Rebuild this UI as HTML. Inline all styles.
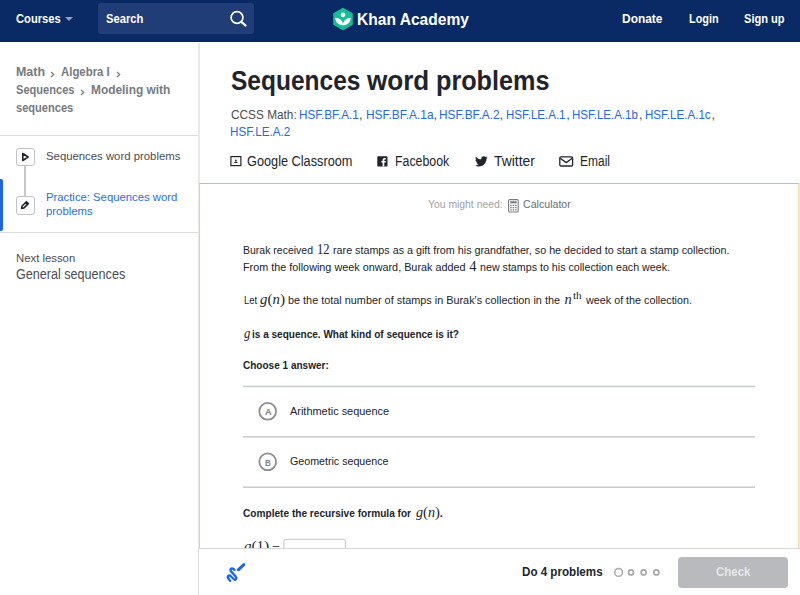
<!DOCTYPE html>
<html><head><meta charset="utf-8">
<style>
*{box-sizing:border-box;margin:0;padding:0}
html,body{width:800px;height:595px;overflow:hidden;background:#fff}
body{font-family:"Liberation Sans",sans-serif;color:#21242c;position:relative}
.t{position:absolute;white-space:nowrap;line-height:1;transform-origin:0 0}
.m{font-family:"Liberation Serif",serif}
.pr{font-size:1.04em}
.a{position:absolute}
#hdr{left:0;top:0;width:800px;height:42px;background:#0a2a66;border-bottom:1px solid #0a2459}
#search{left:98px;top:3px;width:156px;height:31px;background:#213d77;border-radius:3px}
.hl{background:#dadcdf;height:1px}
.ib{left:15.500px;width:19px;height:18.700px;border:1.500px solid #c0c2c5;border-radius:3px;background:#fff}
</style></head><body>
<div class="a" id="hdr"></div>
<div class="a" id="search"></div>
<div class="a" style="left:64.500px;top:17px;width:0;height:0;border-left:4.100px solid transparent;border-right:4.100px solid transparent;border-top:4.800px solid #93a0c3"></div>
<svg class="a" style="left:228px;top:9px" width="20" height="20" viewBox="0 0 20 20"><circle cx="9" cy="8.500" r="5.900" fill="none" stroke="#fff" stroke-width="1.700"/><path d="M13.400 12.900L17.500 16.500" stroke="#fff" stroke-width="2.200" stroke-linecap="round"/></svg>
<svg class="a" style="left:331.900px;top:6.600px" width="22" height="24" viewBox="0 0 22 24"><path d="M11 2L19.600 7v10L11 22 2.400 17V7z" fill="#14bf96" stroke="#14bf96" stroke-width="2.400" stroke-linejoin="round"/><circle cx="11" cy="7.800" r="2.400" fill="#fff"/><path d="M3.300 10.800C7.500 10.800 11 13.600 11 18.300 6.800 18.300 3.300 15.400 3.300 10.800zM18.700 10.800C14.500 10.800 11 13.600 11 18.300 15.200 18.300 18.700 15.400 18.700 10.800z" fill="#fff"/></svg>

<!-- sidebar -->
<div class="a" style="left:198px;top:43px;width:2px;height:552px;background:#e9eaeb"></div>
<svg class="a" style="left:50px;top:70.500px" width="5" height="7" viewBox="0 0 5 7"><path d="M1 1L3.700 3.500 1 6" fill="none" stroke="#777a7f" stroke-width="1.200"/></svg>
<svg class="a" style="left:116px;top:70.500px" width="5" height="7" viewBox="0 0 5 7"><path d="M1 1L3.700 3.500 1 6" fill="none" stroke="#777a7f" stroke-width="1.200"/></svg>
<svg class="a" style="left:79.800px;top:88.500px" width="5" height="7" viewBox="0 0 5 7"><path d="M1 1L3.700 3.500 1 6" fill="none" stroke="#777a7f" stroke-width="1.200"/></svg>
<div class="a hl" style="left:0;top:134.500px;width:198px"></div>
<div class="a hl" style="left:0;top:232px;width:198px"></div>
<div class="a" style="left:0;top:178.500px;width:3px;height:52px;background:#1865f2;border-radius:0 2px 2px 0"></div>
<div class="a" style="left:24.300px;top:166px;width:1.500px;height:30px;background:#c6c8cb"></div>
<div class="a ib" style="top:147.800px"></div>
<div class="a ib" style="top:196px"></div>
<svg class="a" style="left:16px;top:148px" width="18" height="18" viewBox="0 0 18 18"><path d="M6.800 5.500L12.100 9l-5.300 3.500z" fill="none" stroke="#21242c" stroke-width="1.600" stroke-linejoin="round"/></svg>
<svg class="a" style="left:16px;top:196px" width="18" height="18" viewBox="0 0 18 18"><path d="M5.600 12.400l.5-2.400 4.300-4.300 1.900 1.900L8 11.900z M9.300 6.800l1.900 1.900" fill="none" stroke="#21242c" stroke-width="1.600" stroke-linejoin="round"/></svg>

<!-- share icons -->
<svg class="a" style="left:230px;top:154.700px" width="12" height="12" viewBox="0 0 12 12"><rect x=".9" y="1.600" width="10" height="9" fill="none" stroke="#21242c" stroke-width="1.200"/><circle cx="5.900" cy="5.300" r=".9" fill="#21242c"/><path d="M4.200 7.900c0-1 .8-1.500 1.700-1.500s1.700.5 1.700 1.500z" fill="#21242c"/><rect x="6.800" y="10" width="3" height=".9" fill="#21242c"/></svg>
<svg class="a" style="left:377px;top:156px" width="11" height="11" viewBox="0 0 11 11"><rect x=".3" y=".3" width="10.200" height="10.200" rx=".8" fill="#21242c"/><path d="M7.300 10.500V6.600h1.300l.2-1.500H7.300v-1c0-.4.100-.7.700-.7h.8V2c-.1 0-.6-.1-1.200-.1-1.200 0-2 .7-2 2v1.200H4.300v1.500h1.300v3.900z" fill="#fff"/></svg>
<svg class="a" style="left:474.500px;top:155.500px" width="13" height="11" viewBox="0 0 24 20"><path d="M23.600 2.400c-.9.400-1.800.7-2.800.8 1-.6 1.800-1.600 2.100-2.700-.9.600-2 1-3.100 1.200C18.900.7 17.700.1 16.300.1c-2.700 0-4.800 2.200-4.800 4.800 0 .4 0 .8.100 1.100C7.600 5.800 4 3.900 1.600 1c-.4.700-.6 1.500-.6 2.400 0 1.700.9 3.100 2.100 4-.8 0-1.500-.2-2.200-.6v.1c0 2.300 1.700 4.300 3.900 4.700-.4.100-.8.200-1.300.2-.3 0-.6 0-.9-.1.600 1.900 2.400 3.300 4.500 3.400-1.600 1.300-3.700 2.100-6 2.100-.4 0-.8 0-1.100-.1 2.100 1.400 4.700 2.200 7.400 2.200 8.900 0 13.700-7.300 13.700-13.700v-.6c1-.7 1.800-1.600 2.500-2.600z" fill="#21242c"/></svg>
<svg class="a" style="left:559px;top:156px" width="15" height="11" viewBox="0 0 15 11"><rect x=".8" y=".8" width="12.800" height="9.200" rx="1.200" fill="none" stroke="#21242c" stroke-width="1.300"/><path d="M1.200 2.200L7.200 6.600 13.200 2.200" fill="none" stroke="#21242c" stroke-width="1.300"/></svg>

<!-- exercise panel -->
<div class="a" style="left:199px;top:183px;width:600px;height:366px;border:1px solid #edcf9c;border-right-color:#eedcb4;border-top:1px solid #eab95f;border-bottom:0;background:linear-gradient(90deg,#fffef8 0,#fff 6px,#fff 590px,#fffdf6 598px)"></div>
<div class="a" style="left:799px;top:183px;width:1px;height:366px;background:#f7eed9"></div>
<svg class="a" style="left:508.200px;top:199.200px" width="11" height="14" viewBox="0 0 11 14"><rect x=".6" y=".6" width="9.600" height="12.400" rx="1" fill="none" stroke="#7b7d81" stroke-width="1.100"/><rect x="2.200" y="2.200" width="6.400" height="2.200" fill="#7b7d81"/><g fill="#7b7d81"><rect x="2.200" y="5.800" width="1.500" height="1.300"/><rect x="4.650" y="5.800" width="1.500" height="1.300"/><rect x="7.100" y="5.800" width="1.500" height="1.300"/><rect x="2.200" y="8" width="1.500" height="1.300"/><rect x="4.650" y="8" width="1.500" height="1.300"/><rect x="7.100" y="8" width="1.500" height="1.300"/><rect x="2.200" y="10.200" width="1.500" height="1.300"/><rect x="4.650" y="10.200" width="1.500" height="1.300"/><rect x="7.100" y="10.200" width="1.500" height="1.300"/></g></svg>

<svg class="a" style="left:0;top:0" width="800" height="595" viewBox="0 0 800 595"><g fill="#c8cacc"><rect x="243" y="385.700" width="512" height="1.500"/><rect x="243" y="436.100" width="512" height="1.500"/><rect x="243" y="486.500" width="512" height="1.500"/></g><rect x="283.900" y="539.300" width="61.600" height="20" rx="2" fill="#fff" stroke="#c2c4c7" stroke-width="1"/><g fill="none" stroke="#8c8e91" stroke-width="1.800"><circle cx="267.700" cy="411.300" r="8.400"/><circle cx="267.700" cy="461.800" r="8.400"/></g></svg>
<span class="t" style="left:15.6px;top:12.60px;font-size:12.2px;transform:scaleX(0.9163);color:#fff;font-weight:bold;">Courses</span>
<span class="t" style="left:105.7px;top:12.60px;font-size:12.2px;transform:scaleX(0.9174);color:#fff;font-weight:bold;">Search</span>
<span class="t" style="left:357px;top:12.00px;font-size:16.7px;transform:scaleX(0.9337);color:#fff;font-weight:bold;">Khan Academy</span>
<span class="t" style="left:622.2px;top:12.60px;font-size:12.2px;transform:scaleX(0.9803);color:#fff;font-weight:bold;">Donate</span>
<span class="t" style="left:688.8px;top:12.60px;font-size:12.2px;transform:scaleX(0.8953);color:#fff;font-weight:bold;">Login</span>
<span class="t" style="left:743.5px;top:12.60px;font-size:12.2px;transform:scaleX(0.9085);color:#fff;font-weight:bold;">Sign up</span>
<span class="t" style="left:16px;top:66.00px;font-size:12px;transform:scaleX(1.0357);color:#777a7f;font-weight:bold;">Math</span>
<span class="t" style="left:61.25px;top:66.00px;font-size:12px;transform:scaleX(0.9492);color:#777a7f;font-weight:bold;">Algebra I</span>
<span class="t" style="left:16px;top:84.00px;font-size:12px;transform:scaleX(0.9231);color:#777a7f;font-weight:bold;">Sequences</span>
<span class="t" style="left:91.25px;top:84.00px;font-size:12px;transform:scaleX(0.9906);color:#777a7f;font-weight:bold;">Modeling with</span>
<span class="t" style="left:16px;top:102.00px;font-size:12px;transform:scaleX(0.9227);color:#777a7f;font-weight:bold;">sequences</span>
<span class="t" style="left:46.25px;top:150.50px;font-size:11.5px;transform:scaleX(0.9866);color:#4a4d52;">Sequences word problems</span>
<span class="t" style="left:46.25px;top:192.20px;font-size:11.5px;transform:scaleX(0.9823);color:#2b6de6;">Practice: Sequences word</span>
<span class="t" style="left:46.25px;top:205.70px;font-size:11.5px;transform:scaleX(0.9881);color:#2b6de6;">problems</span>
<span class="t" style="left:15.8px;top:251.50px;font-size:11.6px;transform:scaleX(0.9773);color:#4a4d52;">Next lesson</span>
<span class="t" style="left:15.8px;top:268.20px;font-size:13.8px;transform:scaleX(0.9126);color:#4a4d52;">General sequences</span>
<span class="t" style="left:230.6px;top:68.00px;font-size:27px;transform:scaleX(0.9076);font-weight:bold;">Sequences</span>
<span class="t" style="left:367px;top:68.00px;font-size:27px;transform:scaleX(0.9659);font-weight:bold;">word</span>
<span class="t" style="left:435.8px;top:68.00px;font-size:27px;transform:scaleX(0.9339);font-weight:bold;">problems</span>
<span class="t" style="left:230.6px;top:108.00px;font-size:13px;transform:scaleX(0.9093);color:#4a4d52;">CCSS Math:</span>
<span class="t" style="left:298.8px;top:108.00px;font-size:13px;transform:scaleX(0.8982);color:#2468ea;">HSF.BF.A.1</span>
<span class="t" style="left:359px;top:108.00px;font-size:13px;color:#4a4d52;">,</span>
<span class="t" style="left:365.7px;top:108.00px;font-size:13px;transform:scaleX(0.9172);color:#2468ea;">HSF.BF.A.1a</span>
<span class="t" style="left:433.6px;top:108.00px;font-size:13px;color:#4a4d52;">,</span>
<span class="t" style="left:438.5px;top:108.00px;font-size:13px;transform:scaleX(0.9102);color:#2468ea;">HSF.BF.A.2</span>
<span class="t" style="left:499.6px;top:108.00px;font-size:13px;color:#4a4d52;">,</span>
<span class="t" style="left:506.2px;top:108.00px;font-size:13px;transform:scaleX(0.8854);color:#2468ea;">HSF.LE.A.1</span>
<span class="t" style="left:566.3px;top:108.00px;font-size:13px;color:#4a4d52;">,</span>
<span class="t" style="left:572.4px;top:108.00px;font-size:13px;transform:scaleX(0.8853);color:#2468ea;">HSF.LE.A.1b</span>
<span class="t" style="left:639px;top:108.00px;font-size:13px;color:#4a4d52;">,</span>
<span class="t" style="left:645.2px;top:108.00px;font-size:13px;transform:scaleX(0.8901);color:#2468ea;">HSF.LE.A.1c</span>
<span class="t" style="left:711.5px;top:108.00px;font-size:13px;color:#4a4d52;">,</span>
<span class="t" style="left:230.2px;top:125.00px;font-size:13px;transform:scaleX(0.8973);color:#2468ea;">HSF.LE.A.2</span>
<span class="t" style="left:246.9px;top:154.00px;font-size:14px;transform:scaleX(0.9091);">Google Classroom</span>
<span class="t" style="left:395px;top:154.00px;font-size:14px;transform:scaleX(0.8815);">Facebook</span>
<span class="t" style="left:493.9px;top:154.00px;font-size:14px;transform:scaleX(0.9919);">Twitter</span>
<span class="t" style="left:579.6px;top:154.00px;font-size:14px;transform:scaleX(0.8568);">Email</span>
<span class="t" style="left:428.2px;top:199.40px;font-size:11px;transform:scaleX(0.9430);color:#a0a2a5;">You might need:</span>
<span class="t" style="left:523px;top:199.40px;font-size:11px;transform:scaleX(0.9650);color:#696c71;">Calculator</span>
<span class="t" style="left:243px;top:245.30px;font-size:10.9px;transform:scaleX(0.9636);color:#21242c;">Burak received</span>
<span class="t m" style="left:317px;top:242.30px;font-size:14.5px;transform:scaleX(0.8621);color:#21242c;">12</span>
<span class="t" style="left:333px;top:245.30px;font-size:10.9px;transform:scaleX(0.9864);color:#21242c;">rare stamps as a gift from his grandfather, so he decided to start a stamp collection.</span>
<span class="t" style="left:243px;top:261.90px;font-size:10.9px;transform:scaleX(0.9934);color:#21242c;">From the following week onward, Burak added</span>
<span class="t m" style="left:469.25px;top:258.90px;font-size:14.5px;color:#21242c;">4</span>
<span class="t" style="left:479.5px;top:261.90px;font-size:10.9px;transform:scaleX(0.9808);color:#21242c;">new stamps to his collection each week.</span>
<span class="t" style="left:243.75px;top:295.30px;font-size:10.9px;transform:scaleX(0.8751);color:#21242c;">Let</span>
<span class="t m" style="left:260px;top:292.30px;font-size:14.5px;transform:scaleX(1.0178);color:#21242c;"><i>g</i><span class="pr">(</span><i>n</i><span class="pr">)</span></span>
<span class="t" style="left:288px;top:295.30px;font-size:10.9px;transform:scaleX(0.9975);color:#21242c;">be the total number of stamps in Burak's collection in the</span>
<span class="t m" style="left:564.5px;top:292.30px;font-size:14.5px;color:#21242c;"><i>n</i></span>
<span class="t m" style="left:573px;top:291.80px;font-size:9.5px;transform:scaleX(1.1772);color:#21242c;">th</span>
<span class="t" style="left:586.3px;top:295.30px;font-size:10.9px;transform:scaleX(0.9892);color:#21242c;">week of the collection.</span>
<span class="t m" style="left:243.5px;top:325.80px;font-size:14.5px;transform:scaleX(0.8690);color:#21242c;"><i>g</i></span>
<span class="t" style="left:251.6px;top:329.00px;font-size:10.9px;transform:scaleX(0.9215);font-weight:bold;color:#21242c;">is a sequence. What kind of sequence is it?</span>
<span class="t" style="left:243px;top:360.40px;font-size:10.9px;transform:scaleX(0.9199);font-weight:bold;color:#21242c;">Choose 1 answer:</span>
<span class="t" style="left:264.9px;top:407.90px;font-size:9px;transform:scaleX(1.0154);color:#7d7f83;font-weight:bold;">A</span>
<span class="t" style="left:265.2px;top:458.50px;font-size:9px;transform:scaleX(0.8923);color:#7d7f83;font-weight:bold;">B</span>
<span class="t" style="left:289.7px;top:405.60px;font-size:10.9px;transform:scaleX(1.0038);color:#21242c;">Arithmetic sequence</span>
<span class="t" style="left:289.8px;top:456.00px;font-size:10.9px;transform:scaleX(0.9796);color:#21242c;">Geometric sequence</span>
<span class="t" style="left:243.2px;top:507.60px;font-size:10.9px;transform:scaleX(0.9287);font-weight:bold;color:#21242c;">Complete the recursive formula for</span>
<span class="t m" style="left:415.5px;top:504.60px;font-size:14.5px;transform:scaleX(0.9771);color:#21242c;"><i>g</i><span class="pr">(</span><i>n</i><span class="pr">)</span></span>
<span class="t" style="left:439.8px;top:507.60px;font-size:10.9px;font-weight:bold;color:#21242c;">.</span>
<span class="t m" style="left:243.9px;top:538.00px;font-size:15px;color:#21242c;"><i>g</i><span class="pr">(</span>1<span class="pr">)</span></span>
<span class="t m" style="left:271.5px;top:541.20px;font-size:14.5px;transform:scaleX(0.9771);color:#21242c;">=</span>
<span class="t" style="left:522.4px;top:565.30px;font-size:13px;transform:scaleX(0.8926);font-weight:bold;z-index:3;">Do 4 problems</span>
<span class="t" style="left:715.6px;top:564.90px;font-size:13px;transform:scaleX(0.8813);font-weight:bold;color:#e6e7e8;z-index:3;">Check</span>

<!-- footer -->
<div class="a" style="left:199px;top:548px;width:601px;height:47px;background:#fff;border-top:1px solid #d6d8da;z-index:2"></div>
<div class="a" style="left:198px;top:548px;width:1px;height:47px;background:#dadcdf;z-index:2"></div>
<svg class="a" style="left:224px;top:561px;z-index:3" width="24" height="24" viewBox="0 0 24 24"><path d="M6.200 19.900L4.100 17.200Q3.200 15.500 4.900 14.600 6 14.200 7 15.500L10.200 18.500Q11.500 19.300 12.200 17.800 12.600 16.700 11.500 15.200L6.600 9.900Q6 8.400 7.300 7.600 8.800 7.100 10.500 8.900" fill="none" stroke="#1865f2" stroke-width="2.300" stroke-linecap="round" stroke-linejoin="round"/><path d="M14.300 8.800L19.800 3.700" stroke="#1865f2" stroke-width="3" stroke-linecap="round"/></svg>
<svg class="a" style="left:600px;top:560px;z-index:3" width="70" height="24" viewBox="600 560 70 24"><g fill="none" stroke="#a7a9ac"><circle cx="618.600" cy="572.400" r="3.900" stroke-width="1.500"/><circle cx="631" cy="572.400" r="2.500" stroke-width="1.700"/><circle cx="643.600" cy="572.400" r="2.500" stroke-width="1.700"/><circle cx="656.400" cy="572.400" r="2.500" stroke-width="1.700"/></g></svg>
<div class="a" style="left:678px;top:557px;width:109.500px;height:30.500px;background:#b8babd;border-radius:4px;z-index:2"></div>
</body></html>
